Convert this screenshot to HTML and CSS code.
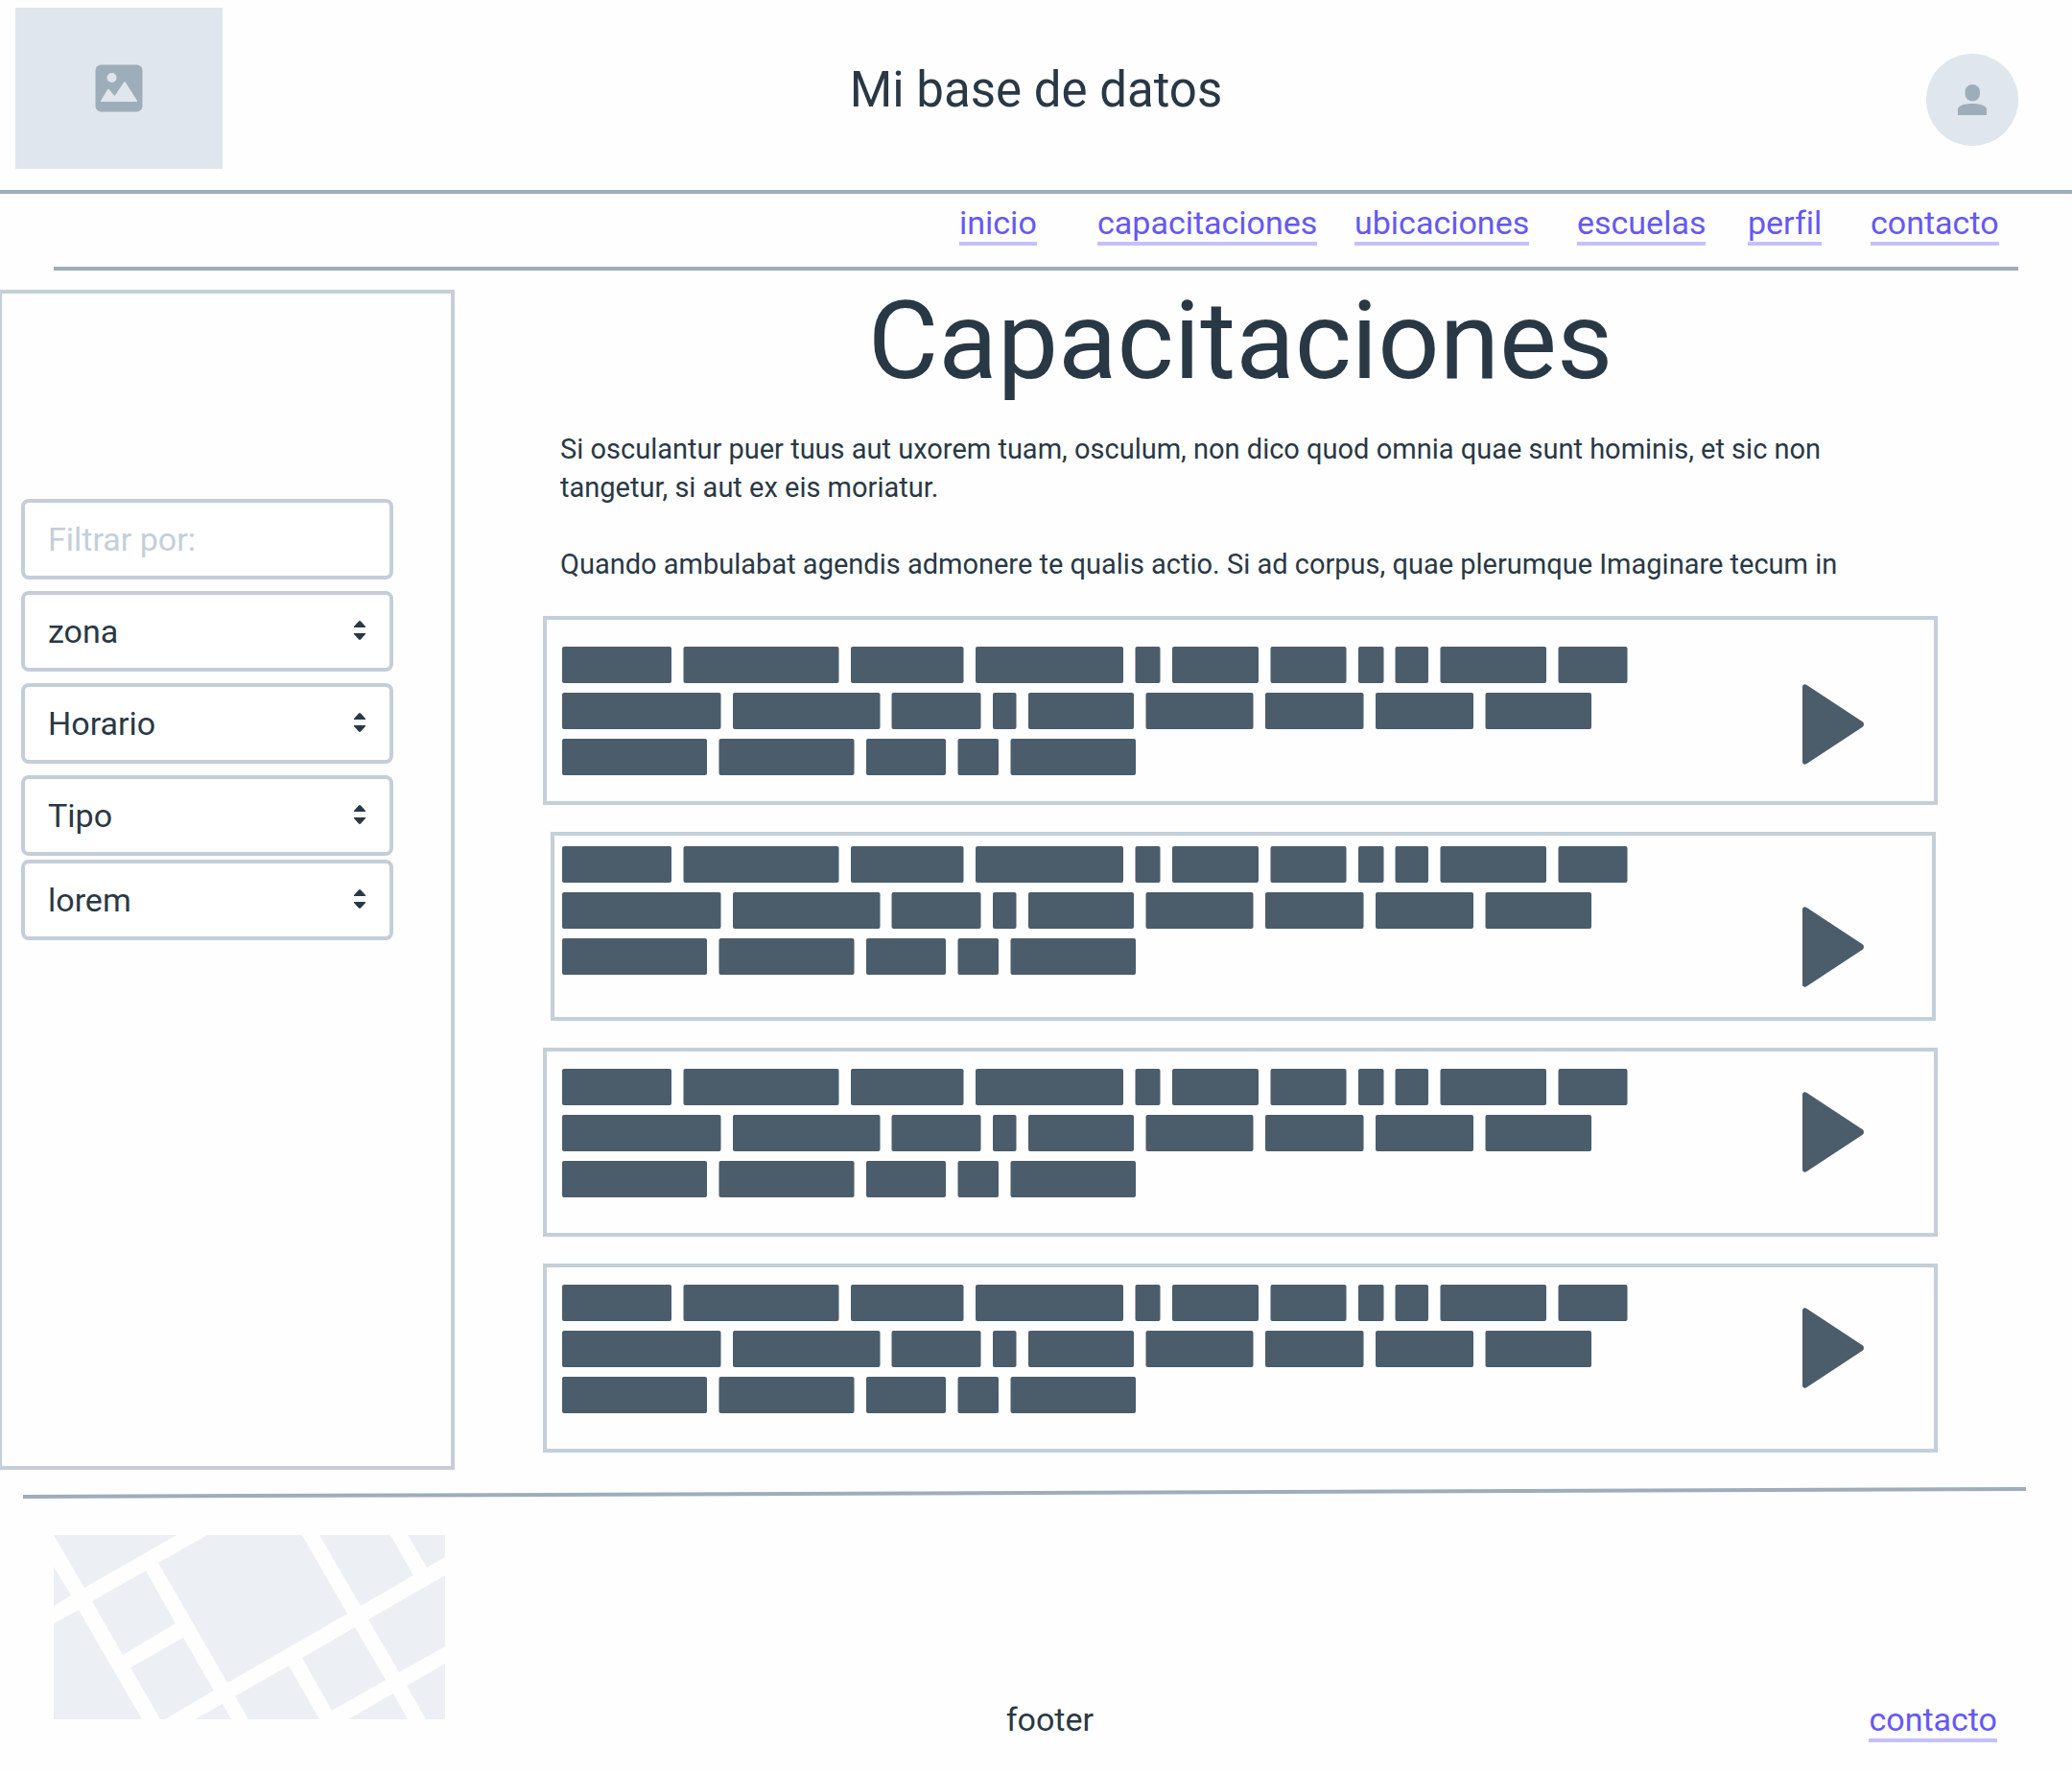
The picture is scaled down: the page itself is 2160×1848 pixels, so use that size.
FILE: index.html
```html
<!DOCTYPE html>
<html lang="es">
<head>
<meta charset="utf-8">
<meta name="viewport" content="width=device-width, initial-scale=1">
<title>Mi base de datos</title>
<link rel="stylesheet" href="styles.css">
</head>
<body>
<svg class="sprite" aria-hidden="true">
  <symbol id="lines" viewBox="0 0 1111 134">
    <g>
      <rect x="0" y="0" width="114" height="38" rx="2"/><rect x="126.500" y="0" width="162" height="38" rx="2"/><rect x="301" y="0" width="117.500" height="38" rx="2"/><rect x="431" y="0" width="154" height="38" rx="2"/><rect x="597.500" y="0" width="26" height="38" rx="2"/><rect x="636" y="0" width="90" height="38" rx="2"/><rect x="738.500" y="0" width="79" height="38" rx="2"/><rect x="830" y="0" width="26.500" height="38" rx="2"/><rect x="868.500" y="0" width="34.500" height="38" rx="2"/><rect x="915.500" y="0" width="110.500" height="38" rx="2"/><rect x="1038.500" y="0" width="72" height="38" rx="2"/>
      <rect x="0" y="48" width="165.500" height="38" rx="2"/><rect x="178" y="48" width="153.500" height="38" rx="2"/><rect x="343.500" y="48" width="93" height="38" rx="2"/><rect x="449" y="48" width="24.500" height="38" rx="2"/><rect x="486" y="48" width="110" height="38" rx="2"/><rect x="608.500" y="48" width="112" height="38" rx="2"/><rect x="733" y="48" width="102.500" height="38" rx="2"/><rect x="848" y="48" width="102" height="38" rx="2"/><rect x="962.500" y="48" width="110.500" height="38" rx="2"/>
      <rect x="0" y="96" width="151" height="38" rx="2"/><rect x="163.500" y="96" width="141" height="38" rx="2"/><rect x="317" y="96" width="83" height="38" rx="2"/><rect x="412.500" y="96" width="42.500" height="38" rx="2"/><rect x="467.500" y="96" width="130.500" height="38" rx="2"/>
    </g>
  </symbol>
  <symbol id="play" viewBox="0 0 64 84">
    <path d="M0 3C0 .5 2.500-.5 4.500 1L63 39.500Q65 42 63 44.500L4.500 83C2.500 84.500 0 83.500 0 81Z"/>
  </symbol>
  <symbol id="sort" viewBox="0 0 12 20">
    <path d="M0 7V6L5 .5Q6-.3 7 .5L12 6V7ZM0 13V14L5 19.500Q6 20.300 7 19.500L12 14V13Z"/>
  </symbol>
</svg>

<header class="header">
  <div class="logo">
    <svg width="50" height="50" viewBox="0 0 50 50" role="img" aria-label="Logo">
      <rect x=".5" y=".5" width="49" height="49" rx="6" fill="#9eadba"/>
      <circle cx="17.500" cy="14" r="5" fill="#dfe6ed"/>
      <path d="M6 39V38L13 26.500Q14 25 15 26.500L20.500 33L30 19Q31 17 32 19L44 38V39Z" fill="#dfe6ed"/>
    </svg>
  </div>
  <p class="brand">Mi base de datos</p>
  <button class="avatar" type="button" aria-label="Perfil de usuario">
    <svg width="30" height="32" viewBox="0 0 30 32" fill="#9eadba">
      <rect x="7.500" y="0" width="15.500" height="17.500" rx="7.700"/>
      <path d="M0 32V26C0 18 30 18 30 26V32Z"/>
    </svg>
  </button>
</header>

<nav class="nav">
  <a class="link" href="#inicio">inicio</a>
  <a class="link" href="#capacitaciones">capacitaciones</a>
  <a class="link" href="#ubicaciones">ubicaciones</a>
  <a class="link" href="#escuelas">escuelas</a>
  <a class="link" href="#perfil">perfil</a>
  <a class="link" href="#contacto">contacto</a>
</nav>

<div class="layout">
  <aside class="sidebar">
    <form class="filters">
      <input class="control" type="text" placeholder="Filtrar por:" aria-label="Filtrar por">
      <div class="pick"><select class="control" aria-label="zona"><option>zona</option></select><svg class="sort"><use href="#sort"/></svg></div>
      <div class="pick"><select class="control" aria-label="Horario"><option>Horario</option></select><svg class="sort"><use href="#sort"/></svg></div>
      <div class="filters-pair">
        <div class="pick"><select class="control" aria-label="Tipo"><option>Tipo</option></select><svg class="sort"><use href="#sort"/></svg></div>
        <div class="pick"><select class="control" aria-label="lorem"><option>lorem</option></select><svg class="sort"><use href="#sort"/></svg></div>
      </div>
    </form>
  </aside>

  <main class="main" id="capacitaciones">
    <h1 class="title">Capacitaciones</h1>
    <div class="intro">
      <p>Si osculantur puer tuus aut uxorem tuam, osculum, non dico quod omnia quae sunt hominis, et sic non tangetur, si aut ex eis moriatur.</p>
      <p>Quando ambulabat agendis admonere te qualis actio. Si ad corpus, quae plerumque Imaginare tecum in</p>
    </div>
    <div class="cards">
      <article class="card card-roomy">
        <svg class="lines"><use href="#lines"/></svg>
        <button class="play" type="button" aria-label="Reproducir"><svg><use href="#play"/></svg></button>
      </article>
      <article class="card card-inset">
        <svg class="lines"><use href="#lines"/></svg>
        <button class="play" type="button" aria-label="Reproducir"><svg><use href="#play"/></svg></button>
      </article>
      <article class="card">
        <svg class="lines"><use href="#lines"/></svg>
        <button class="play" type="button" aria-label="Reproducir"><svg><use href="#play"/></svg></button>
      </article>
      <article class="card">
        <svg class="lines"><use href="#lines"/></svg>
        <button class="play" type="button" aria-label="Reproducir"><svg><use href="#play"/></svg></button>
      </article>
    </div>
  </main>
</div>

<svg class="rule" viewBox="0 0 2088 12" preserveAspectRatio="none" aria-hidden="true"><path d="M0 8L2088 0V4L0 12Z"/></svg>

<footer class="footer">
  <svg class="map" width="408" height="192" viewBox="0 0 408 192" role="img" aria-label="Mapa">
    <path d="M0 0H128L32 55ZM0 33L18 63L0 74ZM0 92L26 78L92 192H0ZM96 37L127 92L72 125L40 69ZM135 107L167 162L116 192H111L80 138ZM160 0H259L306 82L181 154L109 29ZM176 176L185 192H147ZM245 136L277 192H203L189 168ZM314 96L346 151L290 183L259 128ZM354 165L369 192H307ZM277 0H351L375 42L320 74ZM369 0H408V23L389 34ZM408 42V116L360 143L328 88ZM408 134V192H388L368 157Z"/>
  </svg>
  <p class="footer-text">footer</p>
  <a class="link" href="#contacto">contacto</a>
</footer>
</body>
</html>
```
FILE: styles.css
```css
* {
  box-sizing: border-box;
}

body {
  margin: 0;
  background: #fefefe;
  color: #293845;
  font-family: Roboto, "Liberation Sans", sans-serif;
  font-size: 34px;
  font-variant-ligatures: none;
  line-height: 40px;
}

p,
h1 {
  margin: 0;
  font-weight: 400;
}

button {
  border: 0;
  padding: 0;
  background: none;
  cursor: pointer;
}

svg {
  display: block;
}

.sprite {
  display: none;
}

/* Header */
.header {
  display: grid;
  grid-template-columns: 1fr auto 1fr;
  align-items: center;
  padding: 8px 16px 22px;
  border-bottom: 4px solid #9eadba;
}

.logo {
  display: flex;
  align-items: center;
  justify-content: center;
  width: 216px;
  height: 168px;
  background: #dfe6ed;
}

.brand {
  padding-top: 4px;
  font-size: 51px;
  line-height: 64px;
}

.avatar {
  display: flex;
  align-items: center;
  justify-content: center;
  justify-self: end;
  width: 96px;
  height: 96px;
  margin: 24px 40px 0 0;
  border-radius: 50%;
  background: #dfe6ed;
}

/* Navigation */
.nav {
  display: grid;
  grid-template-columns: 144px 268px 232px 178px 128px 132px;
  justify-content: end;
  justify-items: start;
  margin: 0 56px;
  padding: 10px 22px 22px;
  border-bottom: 4px solid #9eadba;
}

.link {
  border-bottom: 4px solid #c5c0fc;
  color: #6558f5;
  text-decoration: none;
}

/* Filters */
.layout {
  display: flex;
}

.sidebar {
  flex: none;
  width: 476px;
  margin: 20px 0 0 -2px;
  padding: 214px 60px 20px 20px;
  border: 4px solid #c3cfd9;
}

.filters {
  display: grid;
  gap: 12px;
}

.filters-pair {
  display: grid;
  gap: 4px;
}

.pick {
  display: grid;
  align-items: center;
}

.pick > * {
  grid-area: 1 / 1;
}

.control {
  appearance: none;
  width: 100%;
  height: 84px;
  padding: 0 24px;
  border: 4px solid #c5cdd8;
  border-radius: 8px;
  background: #fff;
  color: inherit;
  font: inherit;
}

.control::placeholder {
  color: #c3cfd9;
  opacity: 1;
}

.sort {
  justify-self: end;
  width: 12px;
  height: 20px;
  margin: 0 29px 2px 0;
  fill: #293845;
  pointer-events: none;
}

/* Content */
.main {
  flex: 1;
  min-width: 0;
  padding: 14px 140px 18px 92px;
}

.title {
  font-size: 113px;
  line-height: 120px;
  text-align: center;
}

.intro {
  display: grid;
  gap: 40px;
  max-width: 1378px;
  margin: 32px 0 34px;
  padding-left: 18px;
  font-size: 29px;
}

.cards {
  display: grid;
  gap: 28px;
}

.card {
  display: flex;
  align-items: flex-start;
  justify-content: space-between;
  min-height: 197px;
  padding: 18px 73px 0 16px;
  border: 4px solid #c3cfd9;
}

.card-roomy {
  padding-top: 28px;
}

.card-inset {
  margin: 0 2px 0 8px;
  padding: 11px 71px 0 8px;
}

.lines {
  flex: none;
  width: 1111px;
  height: 134px;
  fill: #4b5c6b;
}

.play {
  margin-top: 24px;
}

.card-roomy .play {
  margin-top: 39px;
}

.card-inset .play {
  margin-top: 63px;
}

.play svg {
  width: 64px;
  height: 84px;
  fill: #4b5c6b;
}

/* Footer */
.rule {
  width: calc(100% - 72px);
  height: 12px;
  margin: 18px 48px 0 24px;
  fill: #9eadba;
}

.footer {
  display: grid;
  grid-template-columns: 49% 1fr auto;
  align-items: end;
  padding: 38px 78px 32px 56px;
}

.map {
  margin-bottom: 24px;
  fill: #ecf0f5;
}

.footer-text {
  padding-bottom: 4px;
}
```
